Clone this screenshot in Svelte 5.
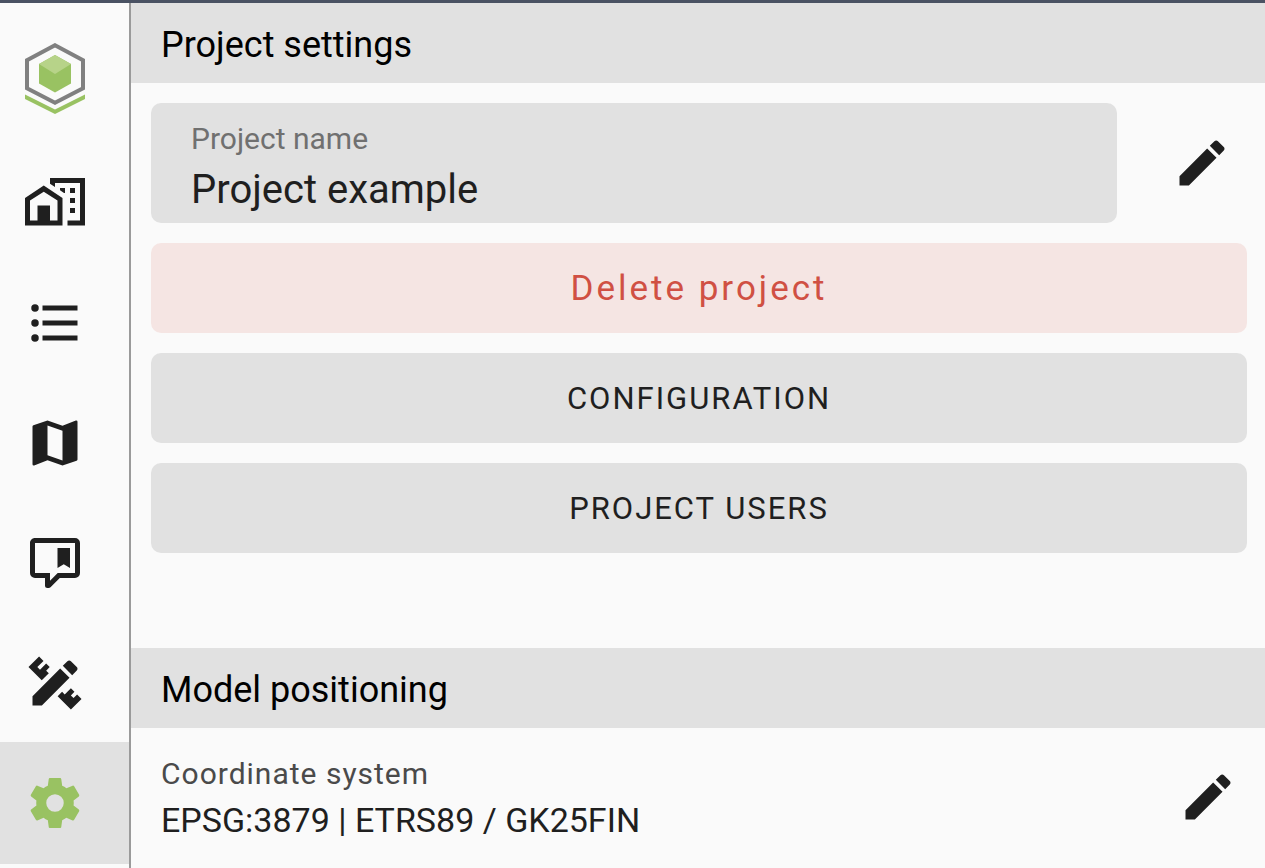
<script>
    const PENCIL =
        "M20.71,7.04C21.1,6.65 21.1,6 20.71,5.63L18.37,3.29C18,2.9 17.35,2.9 16.96,3.29L15.12,5.12L18.87,8.87M3,17.25V21H6.75L17.81,9.93L14.06,6.18L3,17.25Z";

    const navItems = [
        {
            id: "sites",
            label: "Sites",
            path: "M10,2V4.26L12,5.59V4H22V19H17V21H24V2H10M7.5,5L0,10V21H15V10L7.5,5M14,6V6.93L15.61,8H16V6H14M18,6V8H20V6H18M7.5,7.5L13,11V19H10V13H5V19H2V11L7.5,7.5M18,10V12H20V10H18M18,14V16H20V14H18Z",
        },
        {
            id: "list",
            label: "List",
            path: "M7,5H21V7H7V5M7,13V11H21V13H7M4,4.5A1.5,1.5 0 0,1 5.5,6A1.5,1.5 0 0,1 4,7.5A1.5,1.5 0 0,1 2.5,6A1.5,1.5 0 0,1 4,4.5M4,10.5A1.5,1.5 0 0,1 5.5,12A1.5,1.5 0 0,1 4,13.5A1.5,1.5 0 0,1 2.5,12A1.5,1.5 0 0,1 4,10.5M7,19V17H21V19H7M4,16.5A1.5,1.5 0 0,1 5.5,18A1.5,1.5 0 0,1 4,19.5A1.5,1.5 0 0,1 2.5,18A1.5,1.5 0 0,1 4,16.5Z",
        },
        {
            id: "map",
            label: "Map",
            path: "M15,19L9,16.89V5L15,7.11M20.5,3C20.44,3 20.39,3 20.34,3L15,5.1L9,3L3.36,4.9C3.15,4.97 3,5.15 3,5.38V20.5A.5,.5 0 0,0 3.5,21C3.55,21 3.61,21 3.66,20.97L9,18.9L15,21L20.64,19.1C20.85,19 21,18.85 21,18.62V3.5A.5,.5 0 0,0 20.5,3Z",
        },
        {
            id: "comments",
            label: "Comments",
            path: "M9,22A1,1 0 0,1 8,21V18H4A2,2 0 0,1 2,16V4C2,2.89 2.9,2 4,2H20A2,2 0 0,1 22,4V16A2,2 0 0,1 20,18H13.9L10.2,21.71C10,21.9 9.75,22 9.5,22H9M10,16V19.08L13.08,16H20V4H4V16H10M13,6H18V14L15.5,12.5L13,14V6Z",
        },
        {
            id: "tools",
            label: "Tools",
            path:
                PENCIL +
                "M1.39,5.64L5.64,1.39L7.4,3.16L4.93,5.64L6,6.7L8.46,4.22L9.88,5.64L8.46,7.05L9.53,8.11L6.7,10.94L1.39,5.64M22.61,18.36L18.36,22.61L13.06,17.31L14.83,15.54L15.89,16.6L18.36,14.12L19.78,15.54L18.36,16.95L19.42,18L20.84,16.6L22.61,18.36Z",
        },
        {
            id: "settings",
            label: "Settings",
            path: "M12,15.5A3.5,3.5 0 0,1 8.5,12A3.5,3.5 0 0,1 12,8.5A3.5,3.5 0 0,1 15.5,12A3.5,3.5 0 0,1 12,15.5M19.43,12.97C19.47,12.65 19.5,12.33 19.5,12C19.5,11.67 19.47,11.34 19.43,11L21.54,9.37C21.73,9.22 21.78,8.95 21.66,8.73L19.66,5.27C19.54,5.05 19.27,4.96 19.05,5.05L16.56,6.05C16.04,5.66 15.5,5.32 14.87,5.07L14.5,2.42C14.46,2.18 14.25,2 14,2H10C9.75,2 9.54,2.18 9.5,2.42L9.13,5.07C8.5,5.32 7.96,5.66 7.44,6.05L4.95,5.05C4.73,4.96 4.46,5.05 4.34,5.27L2.34,8.73C2.21,8.95 2.27,9.22 2.46,9.37L4.57,11C4.53,11.34 4.5,11.67 4.5,12C4.5,12.33 4.53,12.65 4.57,12.97L2.46,14.63C2.27,14.78 2.21,15.05 2.34,15.27L4.34,18.73C4.46,18.95 4.73,19.03 4.95,18.95L7.44,17.94C7.96,18.34 8.5,18.68 9.13,18.93L9.5,21.58C9.54,21.82 9.75,22 10,22H14C14.25,22 14.46,21.82 14.5,21.58L14.87,18.93C15.5,18.67 16.04,18.34 16.56,17.94L19.05,18.95C19.27,19.03 19.54,18.95 19.66,18.73L21.66,15.27C21.78,15.05 21.73,14.78 21.54,14.63L19.43,12.97Z",
        },
    ];

    let active = $state("settings");
    let projectName = $state("Project example");
    let editing = $state(false);
    let nameInput;

    function toggleEdit() {
        editing = !editing;
        if (editing) nameInput.focus();
    }
</script>

<div class="app">
    <nav class="sidebar">
        <a class="logo" href="#home" aria-label="Home">
            <svg viewBox="0 0 60 72" width="60" height="72">
                <path
                    d="M30 2.2L58 17.2V45.2L30 59.7L2 45.2V17.2Z"
                    fill="none"
                    stroke="#808080"
                    stroke-width="4"
                />
                <path d="M30 12L46 21V40.5L30 49.5L14 40.5V21Z" fill="#99c262" />
                <path d="M30 12L46 21L30 31L14 21Z" fill="#b7d389" />
                <path d="M0 51.5L30 66.5L60 51.5V56L30 71L0 56Z" fill="#99c262" />
            </svg>
        </a>
        {#each navItems as item (item.id)}
            <button
                class="nav-item"
                class:active={active === item.id}
                aria-label={item.label}
                onclick={() => (active = item.id)}
            >
                <svg class="icon" viewBox="0 0 24 24"><path d={item.path} /></svg>
            </button>
        {/each}
    </nav>

    <main class="content">
        <section>
            <h2 class="section-title">Project settings</h2>
            <div class="settings">
                <div class="name-row">
                    <div class="field">
                        <label for="project-name">Project name</label>
                        <input
                            id="project-name"
                            type="text"
                            readonly={!editing}
                            bind:value={projectName}
                            bind:this={nameInput}
                        />
                    </div>
                    <button class="edit-btn" aria-label="Edit project name" onclick={toggleEdit}>
                        <svg class="icon" viewBox="0 0 24 24"><path d={PENCIL} /></svg>
                    </button>
                </div>
                <button class="btn delete">Delete project</button>
                <button class="btn">CONFIGURATION</button>
                <button class="btn">PROJECT USERS</button>
            </div>
        </section>

        <section class="positioning">
            <h2 class="section-title">Model positioning</h2>
            <div class="coord-row">
                <dl class="coord">
                    <dt>Coordinate system</dt>
                    <dd>EPSG:3879 | ETRS89 / GK25FIN</dd>
                </dl>
                <button class="edit-btn" aria-label="Edit coordinate system">
                    <svg class="icon" viewBox="0 0 24 24"><path d={PENCIL} /></svg>
                </button>
            </div>
        </section>
    </main>
</div>

<style>
    :global(body) {
        background: #fafafa;
    }

    .app {
        display: flex;
        min-height: 100vh;
        box-sizing: border-box;
        border-top: 3px solid #4a5263;
        background: #fafafa;
        color: #1f1f1f;
        font-family: Roboto, "Liberation Sans", sans-serif;
    }

    button {
        border: none;
        background: none;
        padding: 0;
        color: inherit;
        font-family: inherit;
        cursor: pointer;
    }

    .icon {
        display: block;
        width: 60px;
        height: 60px;
        fill: currentColor;
    }

    .sidebar {
        flex: none;
        width: 129px;
        display: flex;
        flex-direction: column;
        border-right: 2px solid #9a9a9a;
    }

    .logo {
        height: 100px;
        padding: 40px 0 0 25px;
    }

    .nav-item {
        height: 120px;
        padding-left: 25px;
    }

    .nav-item.active {
        background: #e1e1e1;
        box-shadow: 0 0 0 1px #e1e1e1;
        clip-path: inset(-1px 0);
        color: #99c262;
    }

    .content {
        flex: 1;
        min-width: 0;
    }

    .section-title {
        margin: 0;
        padding: 4px 30px 0;
        background: #e1e1e1;
        color: #000;
        font-size: 36px;
        font-weight: 400;
        line-height: 76px;
    }

    .settings {
        display: flex;
        flex-direction: column;
        gap: 20px;
        padding: 20px 18px 20px 20px;
    }

    .name-row {
        display: flex;
        align-items: center;
        gap: 40px;
    }

    .field {
        flex: 1;
        min-width: 0;
        display: flex;
        flex-direction: column;
        padding: 16px 40px 4px;
        border-radius: 10px;
        background: #e1e1e1;
    }

    .field label {
        color: #707070;
        font-size: 30px;
        line-height: 40px;
    }

    .field input {
        width: 100%;
        height: 60px;
        padding: 0;
        border: none;
        outline: none;
        background: none;
        color: inherit;
        font-family: inherit;
        font-size: 40px;
    }

    .edit-btn {
        flex: none;
        width: 90px;
        height: 90px;
        display: grid;
        place-items: center;
    }

    .btn {
        height: 90px;
        border-radius: 10px;
        background: #e1e1e1;
        font-size: 31px;
        letter-spacing: 2px;
    }

    .btn.delete {
        background: #f5e5e3;
        color: #d05043;
        font-size: 35px;
        letter-spacing: 3px;
    }

    .positioning {
        margin-top: 75px;
    }

    .coord-row {
        display: flex;
        align-items: center;
        justify-content: space-between;
        padding: 23px 12px 23px 30px;
    }

    .coord {
        margin: 0;
    }

    .coord dt {
        color: #4a4a4a;
        font-size: 30px;
        letter-spacing: 1px;
        line-height: 46px;
    }

    .coord dd {
        margin: 0;
        font-size: 34px;
        line-height: 46px;
    }
</style>
